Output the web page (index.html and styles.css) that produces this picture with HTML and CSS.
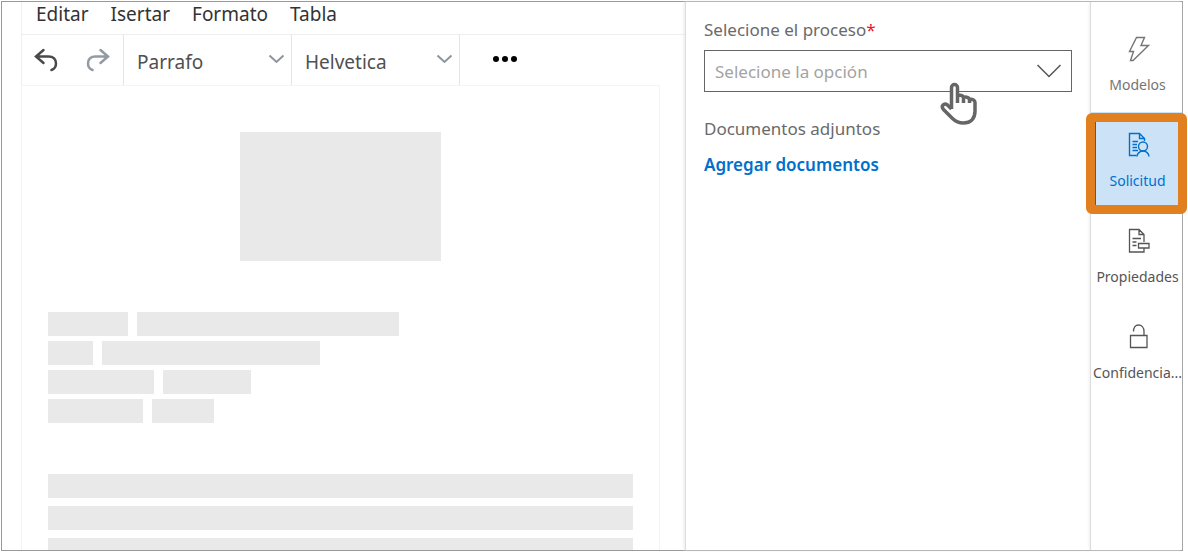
FILE: index.html
```html
<!DOCTYPE html>
<html lang="es">
<head>
<meta charset="utf-8">
<meta name="viewport" content="width=device-width, initial-scale=1">
<title>Editor de documentos</title>
<link rel="stylesheet" href="styles.css">
</head>
<body>
<div class="frame">
  <main class="editor">
    <nav class="menubar">
      <button class="menu" type="button">Editar</button>
      <button class="menu" type="button">Isertar</button>
      <button class="menu" type="button">Formato</button>
      <button class="menu" type="button">Tabla</button>
    </nav>
    <div class="toolbar">
      <div class="history">
        <button class="tool" type="button" aria-label="Deshacer">
          <svg width="24" height="24" viewBox="0 0 24 24" stroke-width="2.500" stroke-linecap="round"><path d="M9.500 2 2 8.500 9.500 15M2.500 8.500H14.500c5 0 7.500 3 7.500 7 0 3-1.500 5.500-4.500 6.500"/></svg>
        </button>
        <button class="tool redo" type="button" aria-label="Rehacer">
          <svg width="24" height="24" viewBox="0 0 24 24" stroke-width="2.500" stroke-linecap="round"><path d="M14.500 2 22 8.500 14.500 15M21.500 8.500H9.500c-5 0-7.500 3-7.500 7 0 3 1.500 5.500 4.500 6.500"/></svg>
        </button>
      </div>
      <div class="picker">
        <select class="format" aria-label="Estilo"><option>Parrafo</option></select>
        <svg class="caret" width="17" height="10" viewBox="0 0 17 10"><path d="m1.500 1.500 7 6.500 7-6.500"/></svg>
      </div>
      <div class="picker">
        <select class="format" aria-label="Fuente"><option>Helvetica</option></select>
        <svg class="caret" width="17" height="10" viewBox="0 0 17 10"><path d="m1.500 1.500 7 6.500 7-6.500"/></svg>
      </div>
      <button class="tool more" type="button" aria-label="Más opciones">
        <svg width="24" height="6" viewBox="0 0 24 6"><circle cx="3" cy="3" r="3"/><circle cx="12" cy="3" r="3"/><circle cx="21" cy="3" r="3"/></svg>
      </button>
    </div>
    <div class="sheet">
      <div class="block picture"></div>
      <div class="fields">
        <div class="row"><div class="block w80"></div><div class="block w262"></div></div>
        <div class="row"><div class="block w45"></div><div class="block w218"></div></div>
        <div class="row"><div class="block w106"></div><div class="block w88"></div></div>
        <div class="row"><div class="block w95"></div><div class="block w62"></div></div>
      </div>
      <div class="paragraph">
        <div class="block"></div>
        <div class="block"></div>
        <div class="block"></div>
      </div>
    </div>
  </main>

  <section class="panel">
    <label class="label" for="process">Selecione el proceso<span class="required">*</span></label>
    <div class="dropdown">
      <select id="process" class="process"><option>Selecione la opción</option></select>
      <svg class="arrow" width="26" height="14" viewBox="0 0 26 14" stroke-width="1.500"><path d="m1.500 1 11.500 11.500L24.500 1"/></svg>
      <svg class="hand" width="38" height="44" viewBox="0 0 38 44" stroke-width="3.500"><path d="M11.500 27V5.500a3 3 0 0 1 6 0V21M17.500 14c2.500-1.500 6-.5 6 2V21M23.500 15.500c2.500-1 6 0 6 2.500v3M29.500 17.500c2.500-1 5.500.5 5.500 3v8.500c0 8-4.500 12-11.500 12-5 0-8-1.500-11-4.500L3.500 27.500c-3-3.500.5-7 4-4.500l4 4"/></svg>
    </div>
    <h2 class="label">Documentos adjuntos</h2>
    <a class="add" href="#">Agregar documentos</a>
  </section>

  <nav class="sidebar">
    <button class="tab muted" type="button">
      <svg class="icon" width="24" height="26" viewBox="0 0 24 26" stroke-width="1.400"><path d="M9.500 1.500h8L14 9.500h7.500L6 24.500H3.500L6.500 15.500H2.500z"/></svg>
      <span class="name">Modelos</span>
    </button>
    <button class="tab active" type="button">
      <svg class="icon" width="24" height="26" viewBox="0 0 24 26" stroke-width="1.400"><path d="M9.500 23.500H2.500v-22h10l5 5V9M12.500 1.500v5h5M5.500 9.500H11M5.500 12.500h4.500M5.500 15.500H10M5.500 18.500H11"/><circle cx="16" cy="14.500" r="4.500"/><path d="M10 24.500c0-3 3-5.500 6-5.500s6 2.500 6 5.500"/></svg>
      <span class="name">Solicitud</span>
    </button>
    <button class="tab" type="button">
      <svg class="icon" width="24" height="26" viewBox="0 0 24 26" stroke-width="1.300"><path d="M17 14V6.500l-5-5H2.500v22.500H17v-3.500M12 1.500v5h5M5.500 10.500H14M5.500 14h4M5.500 17.500h4M11.500 15.500h10.500v4.500H11.500z"/></svg>
      <span class="name">Propiedades</span>
    </button>
    <button class="tab" type="button">
      <svg class="icon" width="24" height="26" viewBox="0 0 24 26" stroke-width="1.300"><path d="M3.500 11.500h16.500v12H3.500zM6.500 7.500c0-4 2-6.500 5-6.500s5.500 2.500 5.500 6.500v4"/></svg>
      <span class="name">Confidencia...</span>
    </button>
  </nav>
</div>
</body>
</html>
```

FILE: styles.css
```css
* { box-sizing: border-box; }

body {
  margin: 0;
  padding: 1px 5px 1px 1px;
  background: #fff;
  color: #444;
  font-family: "Noto Sans", "Open Sans", sans-serif;
}

button, select {
  margin: 0;
  padding: 0;
  border: 0;
  border-radius: 0;
  background: none;
  color: inherit;
  font: inherit;
}

svg {
  display: block;
  fill: none;
  stroke: currentColor;
}

.frame {
  display: flex;
  height: calc(100vh - 2px);
  border: 1px solid #999;
}

.editor {
  display: flex;
  flex: 1;
  flex-direction: column;
  min-width: 0;
  padding-left: 19px;
  overflow: hidden;
}

.menubar {
  display: flex;
  flex: none;
  gap: 22px;
  height: 33px;
  padding: 0 14px 8px;
  border-bottom: 1px solid #eee;
  border-left: 1px solid #f0f0f0;
}

.menu {
  color: #333;
  font-size: 19px;
  line-height: 24px;
}

.toolbar {
  display: flex;
  flex: none;
  height: 50px;
  border-left: 1px solid #eee;
}

.history {
  display: flex;
  gap: 28px;
  width: 101px;
  padding: 0 12px;
}

.tool {
  display: flex;
  align-items: center;
  color: #4a4a4a;
}

.redo { color: #929aa3; }

.more {
  padding: 0 33px 2px;
  color: #000;
}

.more svg {
  fill: currentColor;
  stroke: none;
}

.picker {
  position: relative;
  width: 168px;
  border-left: 1px solid #e4e4e4;
}

.picker + .more { border-left: 1px solid #e4e4e4; }

.format {
  width: 100%;
  height: 100%;
  padding: 4px 30px 0 13px;
  appearance: none;
  color: #505050;
  font-size: 19px;
}

.caret {
  position: absolute;
  top: 19px;
  right: 6px;
  color: #8c959e;
  stroke-width: 2;
  pointer-events: none;
}

.sheet {
  flex: 1;
  min-height: 0;
  margin-right: 25px;
  padding: 46px 26px 0;
  border: 1px solid #f4f4f4;
  border-bottom: 0;
  overflow: hidden;
}

.block {
  height: 24px;
  background: #e9e9e9;
}

.picture {
  width: 201px;
  height: 129px;
  margin: 0 auto 51px;
}

.fields {
  display: grid;
  gap: 5px;
  margin-bottom: 51px;
}

.row {
  display: flex;
  gap: 9px;
}

.w45 { width: 45px; }
.w62 { width: 62px; }
.w80 { width: 80px; }
.w88 { width: 88px; }
.w95 { width: 95px; }
.w106 { width: 106px; }
.w218 { width: 218px; }
.w262 { width: 262px; }

.paragraph {
  display: grid;
  gap: 8px;
}

.panel {
  width: 405px;
  padding: 16px 18px 0;
  border-left: 1px solid #dcdcdc;
  box-shadow: -1px 0 3px #e8e8e8;
}

.label {
  display: block;
  margin: 0;
  color: #6a6a6a;
  font-size: 17px;
  font-weight: 400;
  line-height: 24px;
}

.required { color: #f01030; }

.dropdown {
  position: relative;
  height: 42px;
  margin: 8px 0 25px;
}

.process {
  width: 100%;
  height: 100%;
  padding: 0 50px 0 10px;
  border: 1px solid #666;
  appearance: none;
  color: #a3a3a3;
  font-size: 17px;
}

.arrow {
  position: absolute;
  top: 14px;
  right: 10px;
  color: #555;
  pointer-events: none;
}

.hand {
  position: absolute;
  top: 32px;
  right: 94px;
  color: #666;
  fill: #fff;
  pointer-events: none;
}

.add {
  display: block;
  margin-top: 12px;
  color: #0070cc;
  font-size: 17px;
  font-weight: 600;
  line-height: 24px;
  text-decoration: none;
}

.sidebar {
  display: flex;
  flex-direction: column;
  width: 92px;
  padding-top: 14px;
  border-left: 1px solid #ddd;
  box-shadow: -1px 0 3px #eee;
}

.tab {
  display: flex;
  position: relative;
  flex-direction: column;
  align-items: center;
  height: 96px;
  padding-top: 20px;
  color: #555;
}

.muted { color: #757575; }

.icon { margin-left: 4px; }

.name {
  margin: 13px -2px 0 0;
  font-size: 14px;
  line-height: 20px;
  white-space: nowrap;
}

.active {
  background: #cce3f7;
  color: #0070cc;
}

/* Call-out ring around the selected tab */
.active::after {
  position: absolute;
  inset: 1px -5px -6px;
  border: 9px solid #e2801f;
  border-radius: 6px;
  box-shadow: inset 1px 0 #0070cc;
  content: "";
}
```
